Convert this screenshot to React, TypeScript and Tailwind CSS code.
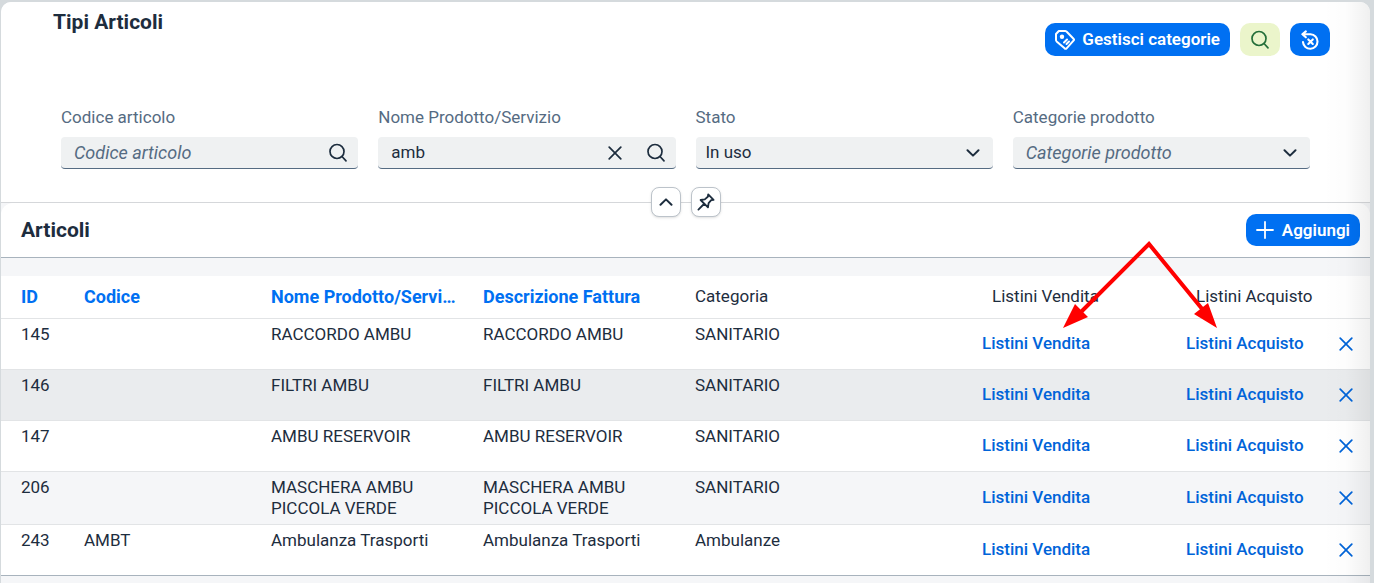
import React from 'react';

const products = [
  { id: 145, code: '', name: 'RACCORDO AMBU', category: 'SANITARIO' },
  { id: 146, code: '', name: 'FILTRI AMBU', category: 'SANITARIO' },
  { id: 147, code: '', name: 'AMBU RESERVOIR', category: 'SANITARIO' },
  { id: 206, code: '', name: 'MASCHERA AMBU PICCOLA VERDE', category: 'SANITARIO' },
  { id: 243, code: 'AMBT', name: 'Ambulanza Trasporti', category: 'Ambulanze' },
];

const rowColors = ['bg-white', 'bg-[#eaecee]', 'bg-white', 'bg-[#f5f6f8]', 'bg-white'];

type IconProps = { className?: string };

const SearchIcon = ({ className }: IconProps) => (
  <svg viewBox="0 0 20 20" fill="none" stroke="currentColor" strokeWidth="1.7" strokeLinecap="round" className={className}>
    <circle cx="9" cy="8.500" r="7" />
    <path d="M14 13.500 18 17.800" />
  </svg>
);

const CloseIcon = ({ className }: IconProps) => (
  <svg viewBox="0 0 14 14" fill="none" stroke="currentColor" strokeWidth="1.7" strokeLinecap="round" className={className}>
    <path d="M1.2 1.2 12.8 12.8M12.8 1.2 1.2 12.8" />
  </svg>
);

const ChevronIcon = ({ className }: IconProps) => (
  <svg viewBox="0 0 14 8" fill="none" stroke="currentColor" strokeWidth="2" strokeLinecap="round" strokeLinejoin="round" className={className}>
    <path d="M1.5 1.2 7 6.6 12.5 1.2" />
  </svg>
);

const TagIcon = ({ className }: IconProps) => (
  <svg viewBox="0 0 20 20" fill="none" stroke="currentColor" strokeWidth="2" strokeLinecap="round" strokeLinejoin="round" className={className}>
    <path d="M3.800 1h6.400c.5 0 .9.200 1.300.500l7 7.200c.6.600.6 1.300 0 1.900l-6.900 7.700c-.6.700-1.400.7-2 0L1.600 11.400c-.4-.4-.6-.8-.6-1.300V4z" />
    <circle cx="7" cy="6.700" r="2.200" fill="currentColor" stroke="none" />
    <path d="M9 12.500 12 9.500M11.500 14 14 11.500" strokeWidth="2" />
  </svg>
);

const ResetIcon = ({ className }: IconProps) => (
  <svg viewBox="0 0 20 22" fill="none" stroke="currentColor" strokeWidth="2.300" strokeLinecap="round" strokeLinejoin="round" className={className}>
    <path d="M5.300 1.500 1.500 4.700l3.800 3.300M1.500 4.700H10.500a8 8 0 1 1-8.300 8.600" />
    <path d="M8 10.400 13 15.400M13 10.400 8 15.400" />
  </svg>
);

const PinIcon = ({ className }: IconProps) => (
  <svg viewBox="0 0 18 18" fill="none" stroke="currentColor" strokeWidth="1.8" strokeLinecap="round" strokeLinejoin="round" className={className}>
    <path d="M11.200 1.400 16.600 6.800 14.200 7.200 11.600 10.200 11 14.400 3.600 7 7.800 6.400 10.800 3.800zM7 11 1.400 16.600" />
  </svg>
);

const PlusIcon = ({ className }: IconProps) => (
  <svg viewBox="0 0 18 18" fill="none" stroke="currentColor" strokeWidth="1.8" strokeLinecap="round" className={className}>
    <path d="M9 1V17M1 9H17" />
  </svg>
);

const fieldBox = 'flex h-8 items-center rounded-[4px] border-b border-[#556b82] bg-[#eff1f2] text-[#1d2d3e]';

const Field = ({ id, label, children }: { id: string; label: string; children: React.ReactNode }) => (
  <div className="min-w-0">
    <label htmlFor={id} className="mb-2 block leading-6 text-[#556b82]">
      {label}
    </label>
    {children}
  </div>
);

const Filters = () => (
  <div className="grid grid-cols-4 gap-5 px-15">
    <Field id="code" label="Codice articolo">
      <div className={fieldBox}>
        <input
          id="code"
          placeholder="Codice articolo"
          className="min-w-0 flex-1 bg-transparent pl-[13px] text-[18px] outline-none placeholder:italic placeholder:text-[#556b82]"
        />
        <button aria-label="Cerca codice" className="px-2.5">
          <SearchIcon className="size-5" />
        </button>
      </div>
    </Field>
    <Field id="name" label="Nome Prodotto/Servizio">
      <div className={fieldBox}>
        <input id="name" defaultValue="amb" className="min-w-0 flex-1 bg-transparent pl-[13px] outline-none" />
        <button aria-label="Cancella" className="px-3.5">
          <CloseIcon className="size-3.5" />
        </button>
        <button aria-label="Cerca nome" className="px-2.5">
          <SearchIcon className="size-5" />
        </button>
      </div>
    </Field>
    <Field id="status" label="Stato">
      <div className="grid items-center">
        <select id="status" className={`${fieldBox} col-start-1 row-start-1 w-full appearance-none pl-2.5 outline-none`}>
          <option>In uso</option>
        </select>
        <ChevronIcon className="pointer-events-none col-start-1 row-start-1 mr-[13px] w-3.5 justify-self-end text-[#1d2d3e]" />
      </div>
    </Field>
    <Field id="category" label="Categorie prodotto">
      <div className="grid items-center">
        <select
          id="category"
          className="col-start-1 row-start-1 h-8 w-full appearance-none rounded-[4px] border-b border-[#556b82] bg-[#eff1f2] pl-[13px] text-[18px] text-[#556b82] italic outline-none"
        >
          <option>Categorie prodotto</option>
        </select>
        <ChevronIcon className="pointer-events-none col-start-1 row-start-1 mr-[13px] w-3.5 justify-self-end text-[#1d2d3e]" />
      </div>
    </Field>
  </div>
);

const ProductTable = () => (
  <table className="w-full table-fixed border-b border-[#a8b3bd] text-left">
    <colgroup>
      <col className="w-[75px]" />
      <col className="w-[187px]" />
      <col className="w-[212px]" />
      <col className="w-[212px]" />
      <col />
      <col className="w-[204px]" />
      <col className="w-[144px]" />
      <col className="w-12" />
    </colgroup>
    <thead>
      <tr className="h-[42px] border-b border-[#e2e4e6] bg-white text-[#0070f2]">
        <th className="pl-5 text-[18px] font-bold">ID</th>
        <th className="px-2 text-[18px] font-bold">Codice</th>
        <th className="truncate pr-3 pl-2 text-[18px] font-bold">Nome Prodotto/Servizio</th>
        <th className="px-2 text-[18px] font-bold">Descrizione Fattura</th>
        <th className="px-2 font-normal text-[#1d2d3e]">Categoria</th>
        <th className="pl-[18px] font-normal text-[#1d2d3e]">Listini Vendita</th>
        <th className="pl-[18px] font-normal text-[#1d2d3e]">Listini Acquisto</th>
        <th />
      </tr>
    </thead>
    <tbody>
      {products.map((product, index) => (
        <tr key={product.id} className={`h-[51px] border-b border-[#e2e4e6] align-top last:border-b-0 ${rowColors[index]}`}>
          <td className="py-[5px] pl-5">{product.id}</td>
          <td className="px-2 py-[5px]">{product.code}</td>
          <td className="px-2 py-[5px]">{product.name}</td>
          <td className="px-2 py-[5px]">{product.name}</td>
          <td className="px-2 py-[5px]">{product.category}</td>
          <td className="px-2 align-middle font-medium text-[#0064d9]">
            <a href="#vendita">Listini Vendita</a>
          </td>
          <td className="px-2 align-middle font-medium text-[#0064d9]">
            <a href="#acquisto">Listini Acquisto</a>
          </td>
          <td className="align-middle text-[#0064d9]">
            <button aria-label="Elimina" className="mx-auto block">
              <CloseIcon className="size-3.5" />
            </button>
          </td>
        </tr>
      ))}
    </tbody>
  </table>
);

// Red callout pointing at the two price list columns
const Callout = () => (
  <svg viewBox="0 0 156 88" className="pointer-events-none absolute top-[239px] right-[151px] w-[156px]">
    <path d="M14 75 86 3 140 69" fill="none" stroke="#f00" strokeWidth="4" />
    <path d="M0 87 12 63 25 76zM154 87 131 73 145 62z" fill="#f00" />
  </svg>
);

const App = () => {
  return (
    <div className="min-h-screen bg-[#d5dadd] pt-0.5 pr-1 pl-px font-[Roboto,sans-serif] text-[17px] leading-[21px] text-[#1d2d3e]">
      <main className="relative min-h-[calc(100vh-2px)] overflow-hidden rounded-t-[10px] bg-[#f5f6f8]">
        <header className="relative border-b border-[#d5d7da] bg-white pb-[33px]">
          <div className="mb-[49px] flex items-start justify-between pr-10 pl-13">
            <h1 className="pt-2.5 text-[21px] font-bold">Tipi Articoli</h1>
            <div className="flex gap-2.5 pt-[21px]">
              <button className="flex h-[33px] items-center gap-[7px] rounded-[10px] bg-[#0070f2] px-2.5 font-semibold text-white">
                <TagIcon className="size-5" />
                Gestisci categorie
              </button>
              <button aria-label="Cerca" className="grid h-[33px] w-10 place-items-center rounded-[10px] bg-[#ebf5cb] text-[#256f3a]">
                <SearchIcon className="size-5" />
              </button>
              <button aria-label="Ripristina" className="grid h-[33px] w-10 place-items-center rounded-[10px] bg-[#0070f2] text-white">
                <ResetIcon className="h-5" />
              </button>
            </div>
          </div>
          <Filters />
          <div className="absolute inset-x-0 -bottom-[15px] z-10 flex justify-center gap-2.5">
            <button aria-label="Comprimi" className="grid size-[30px] place-items-center rounded-lg border border-[#bcc3ca] bg-white shadow">
              <ChevronIcon className="w-3.5 rotate-180" />
            </button>
            <button aria-label="Fissa" className="grid size-[30px] place-items-center rounded-lg border border-[#bcc3ca] bg-white shadow">
              <PinIcon className="size-[18px]" />
            </button>
          </div>
        </header>
        <section>
          <div className="flex h-[55px] items-center justify-between rounded-t-xl border-b border-[#a8b3bd] bg-white pr-2.5 pl-5">
            <h2 className="text-[21px] font-bold">Articoli</h2>
            <button className="flex h-8 items-center gap-2 rounded-[10px] bg-[#0070f2] px-2.5 font-semibold text-white">
              <PlusIcon className="size-[18px]" />
              Aggiungi
            </button>
          </div>
          <div className="h-[18px]" />
          <ProductTable />
        </section>
        <div className="pointer-events-none absolute inset-y-0 right-0 w-12 bg-linear-to-r from-transparent via-black/1 to-black/6" />
        <Callout />
      </main>
    </div>
  );
};

export default App;
